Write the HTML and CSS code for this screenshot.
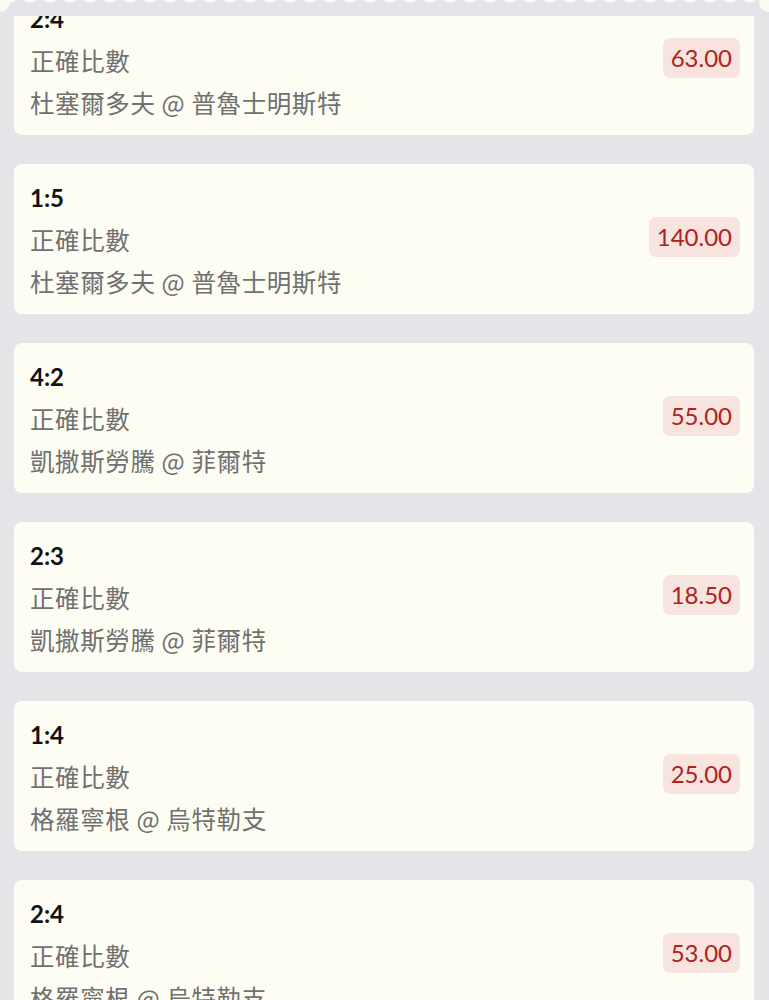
FILE: index.html
```html
<!DOCTYPE html>
<html lang="zh-Hant">
<head>
<meta charset="utf-8">
<link rel="stylesheet" href="styles.css">
</head>
<body>
<div class="ticket-edge">
  <span class="corner corner-left"></span>
  <span class="corner corner-right"></span>
</div>
<main class="list">
  <div class="card">
    <div class="info">
      <div class="score">2:4</div>
      <div class="market">正確比數</div>
      <div class="match">杜塞爾多夫 @ 普魯士明斯特</div>
    </div>
    <div class="odds">63.00</div>
  </div>
  <div class="card">
    <div class="info">
      <div class="score">1:5</div>
      <div class="market">正確比數</div>
      <div class="match">杜塞爾多夫 @ 普魯士明斯特</div>
    </div>
    <div class="odds">140.00</div>
  </div>
  <div class="card">
    <div class="info">
      <div class="score">4:2</div>
      <div class="market">正確比數</div>
      <div class="match">凱撒斯勞騰 @ 菲爾特</div>
    </div>
    <div class="odds">55.00</div>
  </div>
  <div class="card">
    <div class="info">
      <div class="score">2:3</div>
      <div class="market">正確比數</div>
      <div class="match">凱撒斯勞騰 @ 菲爾特</div>
    </div>
    <div class="odds">18.50</div>
  </div>
  <div class="card">
    <div class="info">
      <div class="score">1:4</div>
      <div class="market">正確比數</div>
      <div class="match">格羅寧根 @ 烏特勒支</div>
    </div>
    <div class="odds">25.00</div>
  </div>
  <div class="card">
    <div class="info">
      <div class="score">2:4</div>
      <div class="market">正確比數</div>
      <div class="match">格羅寧根 @ 烏特勒支</div>
    </div>
    <div class="odds">53.00</div>
  </div>
</main>
</body>
</html>
```

FILE: styles.css
```css
html, body {
  margin: 0;
  padding: 0;
  background: #e4e5e9;
  overflow: hidden;
}

body {
  font-family: Lato, "Noto Sans CJK TC", sans-serif;
}

.ticket-edge {
  position: fixed;
  top: 0;
  left: 0;
  right: 0;
  height: 16px;
  z-index: 5;
  background-color: #e4e5e9;
  background-image: radial-gradient(ellipse 7px 3px at 10px 0, rgba(255,255,255,0.85) 60%, rgba(255,255,255,0) 100%);
  background-size: 20px 16px;
  background-repeat: repeat-x;
}

.corner {
  position: absolute;
  top: -8px;
  width: 20px;
  height: 20px;
  border-radius: 50%;
  background: #fbfbf1;
}

.corner-left { left: -10px; }
.corner-right { right: -10px; }

.list {
  display: flex;
  flex-direction: column;
  gap: 29px;
  padding: 0 15px 0 14px;
  margin-top: -15px;
}

.card {
  background: #fdfdf4;
  border-radius: 8px;
  height: 150px;
  box-sizing: border-box;
  padding: 13px 14px 11px 16px;
  display: flex;
  align-items: center;
  justify-content: space-between;
}

.info {
  display: flex;
  flex-direction: column;
  align-self: flex-start;
}

.score {
  font-family: Lato, sans-serif;
  font-weight: 700;
  font-size: 24px;
  line-height: 42px;
  color: #111111;
}

.market, .match {
  font-family: "Noto Sans CJK TC", sans-serif;
  font-size: 24.5px;
  line-height: 42px;
  letter-spacing: 0.6px;
  color: #707070;
}

.odds {
  font-family: Lato, sans-serif;
  font-size: 24px;
  line-height: 40px;
  color: #b0211f;
  background: #f8e4de;
  border-radius: 7px;
  padding: 0 8px;
  margin-top: -6px;
}
```
